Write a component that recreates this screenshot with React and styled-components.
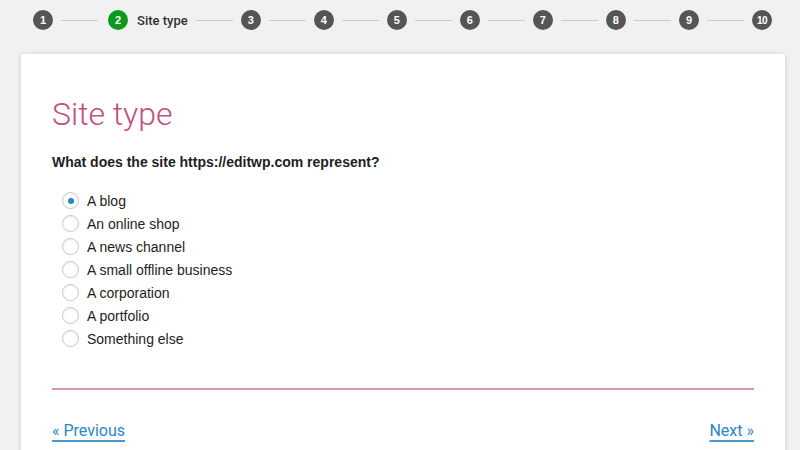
import styled, { createGlobalStyle } from 'styled-components';

const GlobalStyle = createGlobalStyle`
  html, body {
    margin: 0;
    padding: 0;
    background: #f1f1f1;
    font-family: 'Liberation Sans', Arial, sans-serif;
    color: #1e1e1e;
  }
`;

// layout
const Page = styled.div`
  width: 800px;
  height: 450px;
  overflow: hidden;
  background: #f1f1f1;
`;

// stepper
const Stepper = styled.div`
  display: flex;
  align-items: center;
  gap: 8px;
  padding: 10px 28px 0 33px;
  height: 20px;
`;
const Step = styled.div`
  display: flex;
  align-items: center;
  gap: 9px;
  margin-left: ${p => (p.$label ? '2px' : '0')};
`;
const Dot = styled.span`
  width: 20px;
  height: 20px;
  border-radius: 50%;
  background: ${p => (p.$active ? '#0b9a1d' : '#555')};
  color: #fff;
  font-size: ${p => (p.$small ? '10px' : '11px')};
  font-weight: 700;
  display: flex;
  align-items: center;
  justify-content: center;
  letter-spacing: ${p => (p.$small ? '-0.5px' : '0')};
`;
const StepLabel = styled.span`
  font-family: Roboto, 'Liberation Sans', sans-serif;
  font-size: 13px;
  font-weight: 500;
  color: #333;
`;
const Line = styled.span`
  flex: 1;
  height: 1px;
  background: #ccc;
`;

// card
const Card = styled.div`
  margin: 24px 15px 0 21px;
  height: 420px;
  background: #fff;
  box-shadow: 0 1px 5px rgba(0, 0, 0, 0.18);
  padding: 40px 31px 0 31px;
  box-sizing: border-box;
`;
const Title = styled.h1`
  margin: 0;
  font-family: Roboto, 'Liberation Sans', sans-serif;
  font-weight: 300;
  font-size: 32px;
  line-height: 40px;
  color: #c0507f;
`;
const Question = styled.p`
  margin: 19px 0 0;
  font-size: 14px;
  font-weight: 700;
  line-height: 18px;
  color: #1e1e1e;
`;
const Options = styled.div`
  margin-top: 18px;
  display: flex;
  flex-direction: column;
`;
const Option = styled.label`
  display: flex;
  align-items: center;
  gap: 8px;
  height: 23px;
  padding-left: 10px;
  font-size: 14px;
  color: #1e1e1e;
`;
const Radio = styled.span`
  width: 15px;
  height: 15px;
  border-radius: 50%;
  border: 1px solid #c3c6ca;
  box-shadow: inset 0 1px 2px rgba(0, 0, 0, 0.07);
  display: flex;
  align-items: center;
  justify-content: center;
  &::after {
    content: '';
    width: 6px;
    height: 6px;
    border-radius: 50%;
    background: ${p => (p.$checked ? '#1e8cbe' : 'transparent')};
  }
`;
const Divider = styled.hr`
  margin: 38px 0 0;
  border: none;
  height: 2px;
  background: #d897b2;
`;
const Nav = styled.div`
  display: flex;
  justify-content: space-between;
  margin-top: 31px;
`;
const NavLink = styled.a`
  font-family: Roboto, 'Liberation Sans', sans-serif;
  font-size: 16px;
  color: #2a86c4;
  text-decoration: underline;
  text-decoration-thickness: 2px;
  text-underline-offset: 4px;
  text-decoration-color: #4a9ad0;
  cursor: pointer;
`;

const options = [
  'A blog',
  'An online shop',
  'A news channel',
  'A small offline business',
  'A corporation',
  'A portfolio',
  'Something else',
];

const steps = Array.from({ length: 10 }, (_, i) => i + 1);

const App = () => {
  return (
    <>
      <GlobalStyle />
      <Page>
        <Stepper>
          {steps.flatMap(n => [
            n > 1 && <Line key={`l${n}`} />,
            <Step key={n} $label={n === 2}>
              <Dot $active={n === 2} $small={n === 10}>{n}</Dot>
              {n === 2 && <StepLabel>Site type</StepLabel>}
            </Step>,
          ])}
        </Stepper>
        <Card>
          <Title>Site type</Title>
          <Question>What does the site https://editwp.com represent?</Question>
          <Options>
            {options.map((o, i) => (
              <Option key={o}>
                <Radio $checked={i === 0} />
                {o}
              </Option>
            ))}
          </Options>
          <Divider />
          <Nav>
            <NavLink>« Previous</NavLink>
            <NavLink>Next »</NavLink>
          </Nav>
        </Card>
      </Page>
    </>
  );
};

export default App;
